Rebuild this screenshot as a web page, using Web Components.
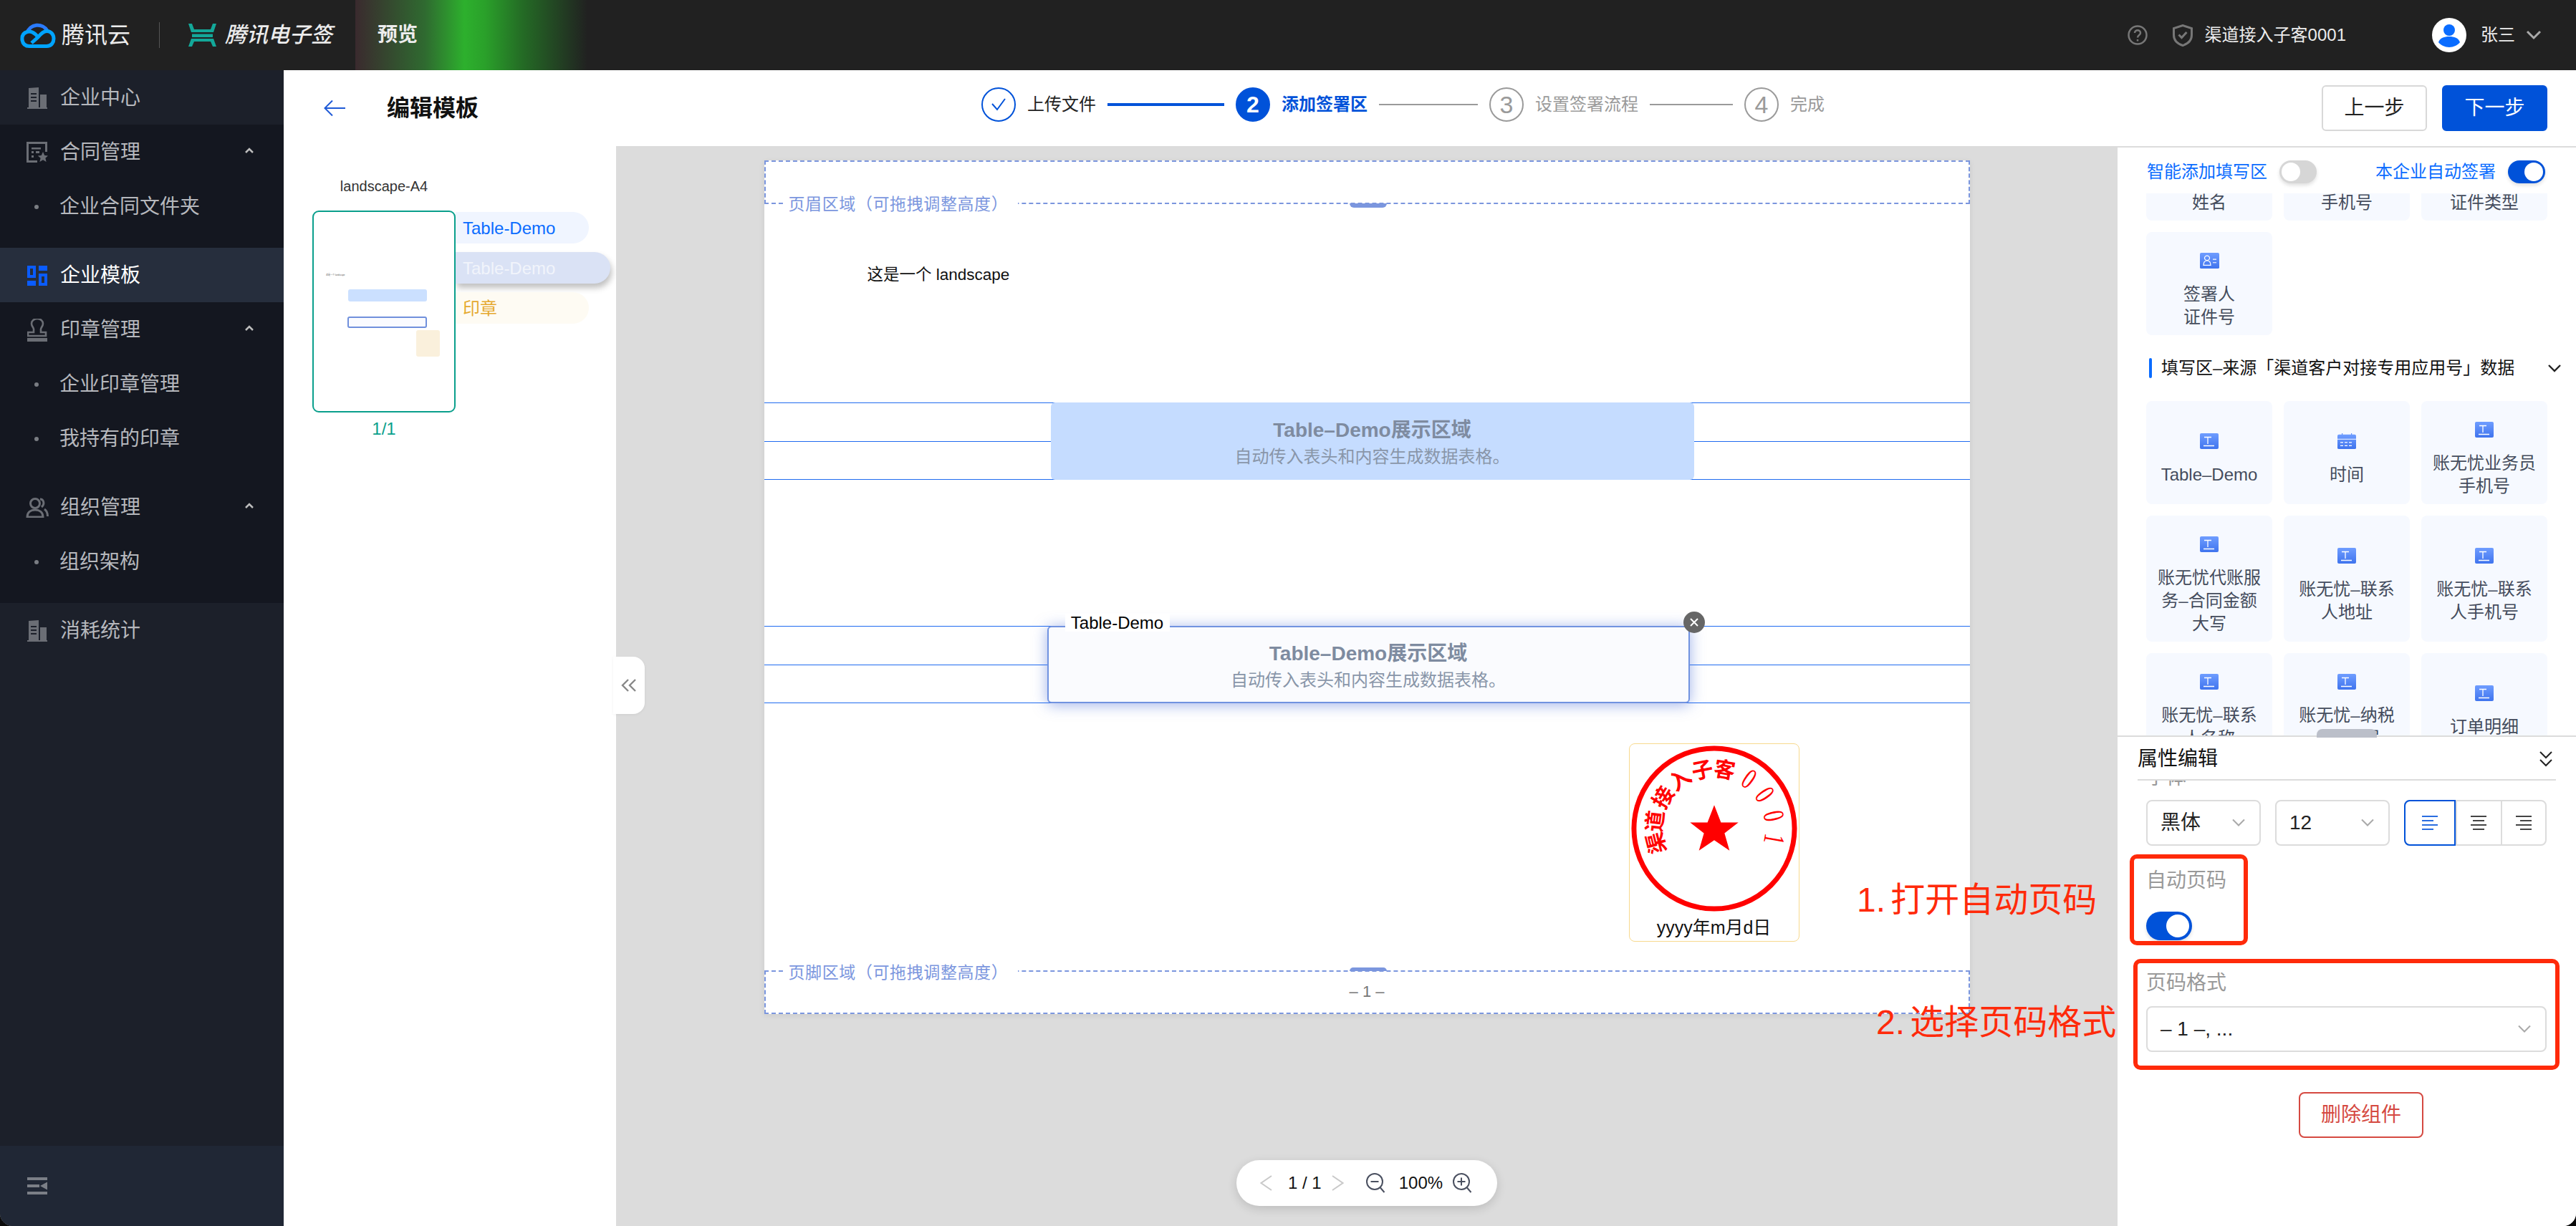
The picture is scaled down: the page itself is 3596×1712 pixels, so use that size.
<!DOCTYPE html>
<html lang="zh">
<head>
<meta charset="utf-8">
<title>编辑模板</title>
<style>
  html, body { margin: 0; background: #0b0b0b; }
  body { font-family: "Liberation Sans", "Noto Sans CJK SC", sans-serif; }
</style>
</head>
<body>
<tc-app>
  <tc-topbar slot="top"></tc-topbar>
  <tc-sidenav slot="nav">
    <tc-nav-item icon="building">企业中心</tc-nav-item>
    <tc-nav-group>
      <tc-nav-item icon="contract" caret>合同管理</tc-nav-item>
      <tc-nav-item sub>企业合同文件夹</tc-nav-item>
    </tc-nav-group>
    <tc-nav-item icon="template" active>企业模板</tc-nav-item>
    <tc-nav-group>
      <tc-nav-item icon="stamp" caret>印章管理</tc-nav-item>
      <tc-nav-item sub>企业印章管理</tc-nav-item>
      <tc-nav-item sub>我持有的印章</tc-nav-item>
    </tc-nav-group>
    <tc-nav-group>
      <tc-nav-item icon="users" caret>组织管理</tc-nav-item>
      <tc-nav-item sub>组织架构</tc-nav-item>
    </tc-nav-group>
    <tc-nav-item icon="building">消耗统计</tc-nav-item>
  </tc-sidenav>
  <tc-toolbar slot="toolbar"></tc-toolbar>
  <tc-rail slot="rail"></tc-rail>
  <tc-canvas slot="canvas"></tc-canvas>
  <tc-panel slot="panel"></tc-panel>
</tc-app>

<script>
// Petites icônes partagées
const ICONS = {
  building: `<svg width="28" height="30" viewBox="0 0 28 30" fill="#6b6e75"><path fill-rule="evenodd" d="M2 1 16 0v28H2zM5 8v2h8V8zm0 5v2h8v-2zm0 5v2h8v-2z"/><path d="M18 10h9v18h-9z"/><path d="M0 28h28v2H0z"/></svg>`,
  contract: `<svg width="30" height="30" viewBox="0 0 30 30" fill="none"><path d="M15 27.500H1.500V1.500h26V14" stroke="#6b6e75" stroke-width="3"/><path d="M7 8h13v2.500H7zM7 13h3v3H7zM13 13h5v3h-5zM7 19h3v3H7z" fill="#6b6e75"/><path d="m23 14 2.200 5 5 .4-3.800 3.400 1.200 5.200-4.600-2.800-4.600 2.800 1.200-5.200-3.800-3.400 5-.4z" fill="#6b6e75"/></svg>`,
  template: `<svg width="28" height="28" viewBox="0 0 28 28" fill="#0a5cff"><path fill-rule="evenodd" d="M0 0h12v17H0zm4 4v9h4V4zM16 11h12v17H16zm4 4v9h4v-9z"/><path d="M16 0h12v7H16zM0 21h12v7H0z"/></svg>`,
  stamp: `<svg width="28" height="32" viewBox="0 0 28 32" fill="none"><path d="M9 16c1-3-3-5-3-9a8 7 0 0 1 16 0c0 4-4 6-3 9v3h7v5H1v-5h8z" stroke="#6b6e75" stroke-width="2.600"/><path d="M0 27h28v5H0z" fill="#6b6e75"/></svg>`,
  users: `<svg width="32" height="28" viewBox="0 0 32 28" fill="none" stroke="#6b6e75" stroke-width="3"><circle cx="13" cy="8" r="6.500"/><path d="M2 27c0-7 5-10 11-10s11 3 11 10z"/><path d="M20 2c5 0 7 7 2 11M26 16c3 2 4.500 6 4.500 10"/></svg>`
};
const T_ICON = `<svg width="26" height="22" viewBox="0 0 26 22"><defs><linearGradient id="g" x1="0" y1="0" x2="0" y2="1"><stop offset="0" stop-color="#6f9dff"/><stop offset="1" stop-color="#3f74ee"/></linearGradient></defs><rect width="26" height="22" rx="2" fill="url(#g)"/><path d="M6 5.500h10M11 5.500V15M5 17.500h15" stroke="#fff" stroke-width="1.300" fill="none"/></svg>`;
const CAL_ICON = `<svg width="26" height="22" viewBox="0 0 26 24" preserveAspectRatio="none"><defs><linearGradient id="g" x1="0" y1="0" x2="0" y2="1"><stop offset="0" stop-color="#6f9dff"/><stop offset="1" stop-color="#3f74ee"/></linearGradient></defs><path d="M6 0h1.200v3H6zM19 0h1.200v3H19z" fill="#5f8ffa"/><rect y="2" width="26" height="22" rx="2" fill="url(#g)"/><path d="M0 9h26" stroke="#fff" stroke-width="1"/><path d="M4 14h18M4 19h18" stroke="#fff" stroke-width="1.300" stroke-dasharray="4 2"/></svg>`;
const ID_ICON = `<svg width="27" height="22" viewBox="0 0 27 24" preserveAspectRatio="none"><defs><linearGradient id="g" x1="0" y1="0" x2="0" y2="1"><stop offset="0" stop-color="#6f9dff"/><stop offset="1" stop-color="#3f74ee"/></linearGradient></defs><rect width="27" height="24" rx="2" fill="url(#g)"/><g fill="none" stroke="#fff" stroke-width="1.300"><circle cx="10" cy="8" r="3.500"/><path d="M5 19c0-5 2-7 5-7s5 2 5 7z"/><path d="M18 10h5M18 15h5"/></g></svg>`;
const CHEVRON = `<svg width="18" height="12" viewBox="0 0 18 12" fill="none"><path d="m1 1.500 8 8 8-8" stroke="#a9a9a9" stroke-width="2"/></svg>`;

class TcApp extends HTMLElement {
  constructor() {
    super();
    this.attachShadow({ mode: 'open' }).innerHTML = `
      <style>
        :host { display: block; position: relative; width: 3596px; height: 1712px; overflow: hidden; border-radius: 0 0 18px 18px; background: #fff; }
        .frame { display: flex; flex-direction: column; height: 100%; }
        .below { flex: 1; display: flex; min-height: 0; }
        .main { flex: 1; display: flex; flex-direction: column; min-width: 0; }
        .work { flex: 1; display: flex; min-height: 0; }
        .box { position: absolute; border: 6px solid #ff2a0a; border-radius: 10px; box-sizing: border-box; }
        .note { position: absolute; color: #ff2a0a; font-size: 48px; line-height: 60px; word-spacing: -6px; white-space: nowrap; }
      </style>
      <div class="frame">
        <slot name="top"></slot>
        <div class="below">
          <slot name="nav"></slot>
          <div class="main">
            <slot name="toolbar"></slot>
            <div class="work"><slot name="rail"></slot><slot name="canvas"></slot><slot name="panel"></slot></div>
          </div>
        </div>
      </div>
      <div class="box" style="left:2973px;top:1193px;width:165px;height:127px"></div>
      <div class="box" style="left:2978px;top:1339px;width:595px;height:155px"></div>
      <div class="note" style="left:2592px;top:1227px">1. 打开自动页码</div>
      <div class="note" style="left:2619px;top:1398px">2. 选择页码格式</div>`;
  }
}

class TcTopbar extends HTMLElement {
  constructor() {
    super();
    this.attachShadow({ mode: 'open' }).innerHTML = `
      <style>
        :host { display: flex; align-items: center; height: 98px; flex: none; background: #212121; color: #ececec; position: relative; }
        .glow { position: absolute; left: 496px; top: 0; width: 324px; height: 100%; background: linear-gradient(90deg, #3a2a2e 0%, #2f6a30 30%, #2db02d 47%, #2aa02a 56%, #246b25 72%, #212121 100%); }
        .left, .right { position: relative; display: flex; align-items: center; }
        .left { padding-left: 28px; }
        .cloud-name { font-size: 32px; line-height: 40px; margin-left: 8px; }
        .sep { width: 1px; height: 36px; background: #555; margin: 0 40px; }
        .sign-name { font-size: 30px; line-height: 40px; font-style: italic; font-weight: 500; margin-left: 12px; }
        .mode { font-size: 28px; line-height: 40px; font-weight: 700; margin-left: 63px; }
        .right { margin-left: auto; font-size: 24px; line-height: 32px; }
      </style>
      <div class="glow"></div>
      <div class="left">
        <svg width="50" height="36" viewBox="0 0 50 36" fill="none"><path d="M10 15A15 14 0 0 1 38 12" stroke="#2a7bff" stroke-width="5"/><path d="M25 21C20 14 14 12 10 13.500 4 15 2.500 20 3 25 4 31 8 33.500 13 33.500L37 33.500C44 33.500 47 28 47 23 47 17 43 12.500 37.500 12.500 32.500 12.500 29 16 25 21L16 29" stroke="#00a4ff" stroke-width="5"/></svg>
        <span class="cloud-name">腾讯云</span>
        <span class="sep"></span>
        <svg width="39" height="32" viewBox="0 0 39 32" fill="#13a899"><path d="M0 0h5l3 8h23l3-8h5l-4 12H4zM5 14.500h29V19H5zM4 21h31l4 11h-5l-3-7H8l-3 7H0z"/></svg>
        <span class="sign-name">腾讯电子签</span>
        <span class="mode">预览</span>
      </div>
      <div class="right">
        <svg width="28" height="28" viewBox="0 0 28 28" fill="none" stroke="#777" stroke-width="2.500"><circle cx="14" cy="14" r="12.500"/><path d="M10 11c0-5 8-5 8 0 0 3-4 3-4 6.500"/><path d="M14 20v2.500"/></svg>
        <svg style="margin-left:35px" width="28" height="31" viewBox="0 0 28 31" fill="none" stroke="#777" stroke-width="3"><path d="M14 1.500 26.500 5.500V15C26.500 23 20 27.500 14 29.500 8 27.500 1.500 23 1.500 15V5.500Z"/><path d="m8.500 14.500 4 4 7-7.500"/></svg>
        <span style="margin-left:17px">渠道接入子客0001</span>
        <svg style="margin-left:120px" width="48" height="48" viewBox="0 0 48 48"><circle cx="24" cy="24" r="24" fill="#fff"/><circle cx="24" cy="17" r="8" fill="#0a6cff"/><path d="M9 34c2-6 8-8 15-8s13 2 15 8c-3 4-9 7-15 7S12 38 9 34z" fill="#0a6cff"/></svg>
        <span style="margin-left:20px">张三</span>
        <svg style="margin:0 48px 0 15px" width="22" height="14" viewBox="0 0 22 14" fill="none"><path d="m2 2 9 9 9-9" stroke="#a9a9a9" stroke-width="3"/></svg>
      </div>`;
  }
}

class TcSidenav extends HTMLElement {
  constructor() {
    super();
    this.attachShadow({ mode: 'open' }).innerHTML = `
      <style>
        :host { display: flex; flex-direction: column; width: 396px; flex: none; background: #1c202a; }
        .foot { margin-top: auto; height: 112px; background: #202735; display: flex; align-items: center; padding-left: 38px; }
      </style>
      <slot></slot>
      <div class="foot"><svg width="28" height="24" viewBox="0 0 28 24" fill="#7b7f87"><path d="M0 0h28v4H0zM0 10h17v4H0zM0 20h28v4H0zM28 6.500v11L18 12z"/></svg></div>`;
  }
}

class TcNavGroup extends HTMLElement {
  constructor() {
    super();
    this.attachShadow({ mode: 'open' }).innerHTML = `
      <style>:host { display: block; background: #141720; padding-bottom: 20px; }</style>
      <slot></slot>`;
  }
}

class TcNavItem extends HTMLElement {
  connectedCallback() {
    if (this.shadowRoot) return;
    const isSub = this.hasAttribute('sub');
    const lead = isSub ? '<i class="dot"></i>' : `<span class="ico">${ICONS[this.getAttribute('icon')] || ''}</span>`;
    const caret = this.hasAttribute('caret')
      ? '<svg class="caret" width="14" height="9" viewBox="0 0 14 9" fill="none"><path d="m2 7 5-5 5 5" stroke="#bdbdbd" stroke-width="2.500"/></svg>' : '';
    this.attachShadow({ mode: 'open' }).innerHTML = `
      <style>
        :host { display: flex; align-items: center; box-sizing: border-box; height: 76px; padding: 2px 0 0 36px; color: #b6b8bd; font-size: 28px; line-height: 40px; }
        :host([active]) { background: #262e3d; color: #fff; }
        .ico { width: 32px; display: flex; justify-content: center; margin-right: 16px; }
        .dot { width: 6px; height: 6px; border-radius: 50%; background: #7a7d83; margin: 0 29px 0 12px; }
        .caret { margin-left: auto; margin-right: 41px; margin-top: -6px; }
      </style>
      ${lead}<slot></slot>${caret}`;
  }
}

class TcStep extends HTMLElement {
  connectedCallback() {
    if (this.shadowRoot) return;
    const state = this.getAttribute('state');
    const mark = state === 'done'
      ? '<svg width="24" height="20" viewBox="0 0 24 20" fill="none"><path d="m3 9 7 8L21 2" stroke="#0052d9" stroke-width="2"/></svg>'
      : this.getAttribute('num');
    this.attachShadow({ mode: 'open' }).innerHTML = `
      <style>
        :host { display: flex; align-items: center; gap: 16px; font-size: 24px; line-height: 32px; color: #9a9a9a; white-space: nowrap; }
        :host([state=done]) { color: #222; }
        :host([state=active]) { color: #0052d9; font-weight: 700; }
        .c { width: 48px; height: 48px; box-sizing: border-box; border-radius: 50%; border: 2px solid #9a9a9a; display: flex; align-items: center; justify-content: center; font-size: 34px; font-weight: 400; }
        :host([state=done]) .c { border-color: #0052d9; }
        :host([state=active]) .c { background: #0052d9; border-color: #0052d9; color: #fff; font-weight: 700; font-size: 32px; }
      </style>
      <span class="c">${mark}</span><slot></slot>`;
  }
}

class TcToolbar extends HTMLElement {
  constructor() {
    super();
    this.attachShadow({ mode: 'open' }).innerHTML = `
      <style>
        :host { display: flex; align-items: center; height: 106px; flex: none; background: #fff; }
        .head { width: 974px; flex: none; display: flex; align-items: center; padding-left: 56px; box-sizing: border-box; }
        h1 { margin: 0 0 0 58px; font-size: 32px; line-height: 44px; font-weight: 700; color: #111; }
        .steps { display: flex; align-items: center; gap: 16px; margin-bottom: 10px; }
        .ln { height: 2px; background: #9a9a9a; }
        .ln.on { height: 4px; background: #0052d9; }
        .acts { margin-left: auto; display: flex; gap: 21px; padding-right: 40px; }
        .btn { width: 147px; height: 64px; box-sizing: border-box; border-radius: 6px; border: 2px solid #d8d8d8; font-size: 28px; line-height: 60px; text-align: center; color: #222; }
        .btn.pri { background: #0052d9; border-color: #0052d9; color: #fff; }
      </style>
      <div class="head">
        <svg width="30" height="24" viewBox="0 0 30 24" fill="none"><path d="M30 12H2M12 1.500 1.500 12 12 22.500" stroke="#1f5ad6" stroke-width="2"/></svg>
        <h1>编辑模板</h1>
      </div>
      <div class="steps">
        <tc-step state="done">上传文件</tc-step><i class="ln on" style="width:163px"></i>
        <tc-step state="active" num="2">添加签署区</tc-step><i class="ln" style="width:138px"></i>
        <tc-step state="todo" num="3">设置签署流程</tc-step><i class="ln" style="width:116px"></i>
        <tc-step state="todo" num="4">完成</tc-step>
      </div>
      <div class="acts"><div class="btn">上一步</div><div class="btn pri">下一步</div></div>`;
  }
}

class TcRail extends HTMLElement {
  constructor() {
    super();
    this.attachShadow({ mode: 'open' }).innerHTML = `
      <style>
        :host { display: block; width: 464px; flex: none; background: #fff; padding: 41px 0 0 40px; box-sizing: border-box; }
        .name { width: 200px; text-align: center; font-size: 20px; line-height: 30px; color: #333; }
        .row { display: flex; margin-top: 19px; }
        .thumb { position: relative; width: 200px; height: 282px; box-sizing: border-box; border: 2px solid #0a9f8c; border-radius: 9px; background: #fff; flex: none; }
        .thumb span { position: absolute; border-radius: 3px; }
        .thumb em { position: absolute; left: 17px; top: 86px; font-style: normal; font-size: 3px; line-height: 4px; color: #555; white-space: nowrap; }
        .tags { display: flex; flex-direction: column; gap: 12px; padding-top: 2px; align-items: flex-start; }
        .tag { width: 176px; height: 44px; padding-left: 10px; font-size: 24px; line-height: 46px; border-radius: 0 22px 22px 0; }
        .a { background: #f0f5ff; color: #0a6cff; }
        .b { width: 206px; background: #dae2f5; color: #f1f4fb; box-shadow: 2px 6px 8px rgba(0,0,0,.25); }
        .c { background: #fefbf3; color: #e5a92f; }
        .page { width: 200px; text-align: center; margin-top: 8px; font-size: 24px; line-height: 30px; color: #0a9f8c; }
      </style>
      <div class="name">landscape-A4</div>
      <div class="row">
        <div class="thumb">
          <em>这是一个 landscape</em>
          <span style="left:48px;top:108px;width:110px;height:17px;background:#cbe0ff"></span>
          <span style="left:47px;top:146px;width:111px;height:16px;box-sizing:border-box;background:#fafbff;border:2px solid #7090dc"></span>
          <span style="left:143px;top:165px;width:33px;height:37px;background:#faf0dc"></span>
        </div>
        <div class="tags">
          <div class="tag a">Table-Demo</div>
          <div class="tag b">Table-Demo</div>
          <div class="tag c">印章</div>
        </div>
      </div>
      <div class="page">1/1</div>`;
  }
}

class TcTableZone extends HTMLElement {
  connectedCallback() {
    if (this.shadowRoot) return;
    const picked = this.hasAttribute('picked');
    this.attachShadow({ mode: 'open' }).innerHTML = `
      <style>
        :host { position: absolute; left: 0; right: 0; display: flex; flex-direction: column; justify-content: space-between; box-sizing: border-box; border-top: 1px solid #1f6bf0; border-bottom: 1px solid #1f6bf0; }
        .mid { height: 1px; background: #1f6bf0; }
        .card { position: absolute; top: -1px; bottom: -1px; box-sizing: border-box; padding-top: 4px; border-radius: 6px; background: #c5dcff; display: flex; flex-direction: column; align-items: center; justify-content: center; text-align: center; color: #7e8ba0; }
        :host([picked]) .card { background: #fafbfe; border: 2px solid #7193e0; box-shadow: 0 2px 20px rgba(80,115,215,.55); }
        b { font-size: 28px; line-height: 40px; }
        small { font-size: 24px; line-height: 34px; color: #8996a9; }
        .tag { position: absolute; left: 23px; top: -19px; width: 146px; height: 25px; background: #fff; color: #000; font-size: 24px; line-height: 25px; text-align: center; }
        .x { position: absolute; right: -23px; top: -22px; width: 30px; height: 30px; }
      </style>
      <div></div><div class="mid"></div><div></div>
      <div class="card" style="left:${this.getAttribute('x')}px;width:${this.getAttribute('w')}px">
        <b>Table–Demo展示区域</b><small>自动传入表头和内容生成数据表格。</small>
        ${picked ? `<div class="tag">Table-Demo</div><svg class="x" viewBox="0 0 30 30"><circle cx="15" cy="15" r="15" fill="#666"/><path d="m10 10 10 10m0-10L10 20" stroke="#fff" stroke-width="2"/></svg>` : ''}
      </div>`;
  }
}

class TcSeal extends HTMLElement {
  constructor() {
    super();
    const glyphs = [['渠',-104],['道',-83],['接',-58.6],['入',-35],['子',-11.5],['客',10],['0',35],['0',56],['0',78],['1',100]];
    const text = glyphs.map(([ch, a]) => {
      const rad = a * Math.PI / 180, x = 119 + 86 * Math.sin(rad), y = 118 - 86 * Math.cos(rad);
      const digit = /\d/.test(ch);
      const font = digit ? 'font-family="Liberation Serif" font-size="38"' : 'font-family="Noto Sans CJK SC" font-size="30" font-weight="700"';
      const squeeze = digit ? ' scale(.75 1.1)' : '';
      return `<text ${font} text-anchor="middle" dominant-baseline="central" fill="#f00" transform="translate(${x.toFixed(1)} ${y.toFixed(1)}) rotate(${a})${squeeze}">${ch}</text>`;
    }).join('');
    this.attachShadow({ mode: 'open' }).innerHTML = `
      <style>
        :host { position: absolute; left: 1207px; top: 814px; width: 238px; height: 277px; box-sizing: border-box; border: 1px solid #f8d98d; border-radius: 8px; display: flex; flex-direction: column; align-items: center; background: #fff; }
        svg { display: block; }
        div { font-size: 25px; line-height: 32px; color: #111; margin-top: 2px; white-space: nowrap; }
      </style>
      <svg width="236" height="238" viewBox="0 0 238 238"><circle cx="119" cy="118" r="113" fill="none" stroke="#f00" stroke-width="7"/>${text}<path d="m119 85 9.500 24.500h24.500l-19.500 15 7 24.500-21.500-14.500-21.500 14.500 7-24.500-19.500-15h24.500z" fill="#f00"/></svg>
      <div>yyyy年m月d日</div>`;
  }
}

class TcPager extends HTMLElement {
  constructor() {
    super();
    const lens = (inner) => `<svg width="27" height="28" viewBox="0 0 27 28" fill="none" stroke="#4a5060" stroke-width="2"><circle cx="12" cy="12" r="11"/><path d="m19.500 20 6 7"/>${inner}</svg>`;
    this.attachShadow({ mode: 'open' }).innerHTML = `
      <style>
        :host { display: flex; align-items: center; width: 364px; height: 64px; box-sizing: border-box; margin: 204px auto 0; padding-left: 33px; border-radius: 32px; background: #fff; box-shadow: 0 4px 14px rgba(0,0,0,.14); font-size: 24px; line-height: 32px; color: #111; white-space: nowrap; }
      </style>
      <svg width="17" height="22" viewBox="0 0 17 22" fill="none"><path d="M16 1 1.500 11 16 21" stroke="#c9c9c9" stroke-width="2"/></svg>
      <span style="margin-left:22px">1 / 1</span>
      <svg style="margin-left:14px" width="17" height="22" viewBox="0 0 17 22" fill="none"><path d="m1 1 14.500 10L1 21" stroke="#c9c9c9" stroke-width="2"/></svg>
      <span style="margin-left:31px;display:flex">${lens('<path d="M6.500 12h11"/>')}</span>
      <span style="margin-left:19px">100%</span>
      <span style="margin-left:14px;display:flex">${lens('<path d="M6.500 12h11M12 6.500v11"/>')}</span>`;
  }
}

class TcCanvas extends HTMLElement {
  constructor() {
    super();
    this.attachShadow({ mode: 'open' }).innerHTML = `
      <style>
        :host { display: block; position: relative; flex: 1; min-width: 0; background: #dcdcdc; padding-top: 20px; box-sizing: border-box; }
        .page { position: relative; width: 1683px; height: 1192px; margin: 0 auto; background: #fff; box-shadow: 0 2px 8px rgba(0,0,0,.08); }
        .zone { position: absolute; left: 0; right: 0; height: 61px; box-sizing: border-box; border: 2px dashed #7b96de; }
        .zone span { position: absolute; left: 27px; background: #fff; padding: 0 14px 0 5px; font-size: 23px; letter-spacing: .6px; line-height: 30px; color: #7b96de; white-space: nowrap; text-spacing-trim: space-all; }
        .grip { position: absolute; left: 817px; width: 52px; background: #7b96de; }
        .para { position: absolute; left: 144px; top: 146px; font-size: 22.5px; line-height: 28px; color: #111; white-space: nowrap; }
        .num { position: absolute; left: 0; right: 0; top: 1147px; text-align: center; font-size: 22px; line-height: 28px; color: #777; }
        .fold { position: absolute; left: -4px; top: 713px; width: 44px; height: 80px; background: #fff; border-radius: 0 16px 16px 0; display: flex; align-items: center; justify-content: center; box-shadow: 0 1px 4px rgba(0,0,0,.06); }
      </style>
      <div class="page">
        <div class="zone" style="top:0"><span style="top:44px">页眉区域（可拖拽调整高度）</span></div>
        <div class="grip" style="top:60px;height:6px;border-radius:0 0 8px 8px"></div>
        <div class="para">这是一个 landscape</div>
        <tc-table-zone style="top:338px;height:108px" x="400" w="898"></tc-table-zone>
        <tc-table-zone picked style="top:650px;height:108px" x="395" w="897"></tc-table-zone>
        <tc-seal></tc-seal>
        <div class="zone" style="top:1131px"><span style="top:-14px">页脚区域（可拖拽调整高度）</span></div>
        <div class="grip" style="top:1127px;height:5px;border-radius:8px 8px 0 0"></div>
        <div class="num">– 1 –</div>
      </div>
      <tc-pager></tc-pager>
      <div class="fold"><svg width="22" height="20" viewBox="0 0 22 20" fill="none"><path d="M10 2 2 10l8 8M20 2l-8 8 8 8" stroke="#888" stroke-width="2.400"/></svg></div>`;
  }
}

class TcToggle extends HTMLElement {
  connectedCallback() {
    if (this.shadowRoot) return;
    this.attachShadow({ mode: 'open' }).innerHTML = `
      <style>
        :host { display: flex; align-items: center; box-sizing: border-box; width: 52px; height: 32px; padding: 3px; border-radius: 16px; background: #d6d6d6; box-shadow: 0 3px 5px rgba(0,0,0,.12); flex: none; }
        :host([on]) { background: #0052d9; justify-content: flex-end; }
        :host([big]) { width: 64px; height: 40px; border-radius: 20px; padding: 4px; }
        i { display: block; height: 100%; aspect-ratio: 1; border-radius: 50%; background: #fff; }
      </style><i></i>`;
  }
}

class TcFieldCard extends HTMLElement {
  connectedCallback() {
    if (this.shadowRoot) return;
    const kind = this.getAttribute('kind');
    this.attachShadow({ mode: 'open' }).innerHTML = `
      <style>
        :host { display: flex; flex-direction: column; align-items: center; justify-content: center; box-sizing: border-box; padding: 29px 14px 9px; border-radius: 8px; background: #f6f9ff; color: #444c5c; font-size: 24px; line-height: 32px; text-align: center; }
        svg { display: block; flex: none; }
        div { margin-top: 20px; }
      </style>
      ${kind === 'cal' ? CAL_ICON : kind === 'id' ? ID_ICON : T_ICON}
      <div><slot></slot></div>`;
  }
}

class TcSelect extends HTMLElement {
  constructor() {
    super();
    this.attachShadow({ mode: 'open' }).innerHTML = `
      <style>
        :host { display: flex; align-items: center; justify-content: space-between; box-sizing: border-box; height: 64px; padding: 0 20px 0 18px; border: 2px solid #dcdcdc; border-radius: 8px; background: #fff; font-size: 28px; line-height: 40px; color: #222; }
      </style>
      <span><slot></slot></span>${CHEVRON}`;
  }
}

class TcPanel extends HTMLElement {
  constructor() {
    super();
    // Quatre traits pour les boutons d'alignement : [départ, longueur]
    const lines = (color, rows) => `<svg width="22" height="20" viewBox="0 0 22 20" fill="none" stroke="${color}" stroke-width="2"><path d="${rows.map(([x, w], i) => `M${x} ${1 + i * 6}h${w}`).join('')}"/></svg>`;
    this.attachShadow({ mode: 'open' }).innerHTML = `
      <style>
        :host { display: flex; flex-direction: column; width: 640px; flex: none; background: #fff; border-top: 2px solid #dcdcdc; box-sizing: border-box; }
        .top { height: 821px; flex: none; display: flex; flex-direction: column; position: relative; }
        .switches { display: flex; align-items: center; padding: 18px 46px 14px 41px; color: #0a6cff; font-size: 24px; line-height: 32px; gap: 17px; white-space: nowrap; }
        .switches tc-toggle:first-of-type { margin-right: 65px; }
        .scroll { flex: 1; overflow: hidden; padding: 0 40px; min-height: 0; }
        .grid { display: grid; grid-template-columns: repeat(3, 176px); gap: 16px; }
        .grid.first { margin-top: -74px; }
        .sec { display: flex; align-items: center; height: 28px; margin: 32px -20px 32px 4px; font-size: 24px; line-height: 28px; color: #111; }
        .sec i { width: 4px; height: 28px; border-radius: 2px; background: #0a6cff; margin-right: 13px; }
        .sec svg { margin-left: auto; }
        .grab { position: absolute; left: 278px; bottom: -3px; width: 84px; height: 12px; background: #bbbfc9; border-radius: 8px 8px 0 0; }
        .low { flex: 1; min-height: 0; display: flex; flex-direction: column; border-top: 2px solid #dcdcdc; }
        .title { display: flex; align-items: center; justify-content: space-between; height: 61px; flex: none; box-sizing: border-box; margin: 0 28px; padding: 2px 4px 0 0; border-bottom: 2px solid #dcdcdc; font-size: 28px; line-height: 40px; color: #111; }
        .body { flex: 1; overflow: hidden; padding: 0 41px 0 40px; }
        .lab { font-size: 28px; line-height: 40px; color: #999; }
        .fonts { display: flex; gap: 20px; margin-top: 11px; }
        .fonts tc-select { width: 160px; }
        .aligns { display: flex; width: 199px; height: 64px; box-sizing: border-box; border: 2px solid #dcdcdc; border-radius: 8px; }
        .aligns span { flex: 1; display: flex; align-items: center; justify-content: center; border-left: 2px solid #dcdcdc; }
        .aligns span:first-child { border: 2px solid #0052d9; border-radius: 8px 0 0 8px; margin: -2px 0 -2px -2px; flex: 0 0 68px; }
        .del { width: 174px; height: 64px; box-sizing: border-box; margin: 56px 0 0 213px; border: 2px solid #d54941; border-radius: 8px; color: #d54941; font-size: 28px; line-height: 60px; text-align: center; }
      </style>
      <div class="top">
        <div class="switches">
          <span>智能添加填写区</span><tc-toggle></tc-toggle>
          <span>本企业自动签署</span><tc-toggle on></tc-toggle>
        </div>
        <div class="scroll">
          <div class="grid first">
            <tc-field-card kind="id">姓名</tc-field-card>
            <tc-field-card kind="id">手机号</tc-field-card>
            <tc-field-card kind="id">证件类型</tc-field-card>
            <tc-field-card kind="id">签署人<br>证件号</tc-field-card>
          </div>
          <div class="sec"><i></i>填写区–来源「渠道客户对接专用应用号」数据<svg width="20" height="12" viewBox="0 0 20 12" fill="none"><path d="m2 2 8 8 8-8" stroke="#222" stroke-width="2.400"/></svg></div>
          <div class="grid">
            <tc-field-card>Table–Demo</tc-field-card>
            <tc-field-card kind="cal">时间</tc-field-card>
            <tc-field-card>账无忧业务员手机号</tc-field-card>
            <tc-field-card>账无忧代账服务–合同金额大写</tc-field-card>
            <tc-field-card>账无忧–联系人地址</tc-field-card>
            <tc-field-card>账无忧–联系人手机号</tc-field-card>
            <tc-field-card>账无忧–联系人名称</tc-field-card>
            <tc-field-card>账无忧–纳税人识别号</tc-field-card>
            <tc-field-card>订单明细</tc-field-card>
          </div>
        </div>
        <div class="grab"></div>
      </div>
      <div class="low">
        <div class="title">属性编辑
          <svg width="20" height="24" viewBox="0 0 20 24" fill="none" stroke="#222" stroke-width="2"><path d="m2 2 8 8 8-8M2 13l8 8 8-8"/></svg>
        </div>
        <div class="body">
          <div class="lab" style="margin-top:-24px">字体</div>
          <div class="fonts">
            <tc-select>黑体</tc-select>
            <tc-select>12</tc-select>
            <div class="aligns">
              <span>${lines('#2a6de0', [[0, 22], [0, 16], [0, 22], [0, 16]])}</span>
              <span>${lines('#444', [[0, 22], [3, 16], [0, 22], [3, 16]])}</span>
              <span>${lines('#444', [[0, 22], [6, 16], [0, 22], [6, 16]])}</span>
            </div>
          </div>
          <div class="lab" style="margin-top:29px">自动页码</div>
          <tc-toggle on big style="margin-top:23px"></tc-toggle>
          <div class="lab" style="margin-top:40px">页码格式</div>
          <tc-select style="margin-top:12px">– 1 –, ...</tc-select>
          <div class="del">删除组件</div>
        </div>
      </div>`;
  }
}

customElements.define('tc-app', TcApp);
customElements.define('tc-topbar', TcTopbar);
customElements.define('tc-sidenav', TcSidenav);
customElements.define('tc-nav-group', TcNavGroup);
customElements.define('tc-nav-item', TcNavItem);
customElements.define('tc-step', TcStep);
customElements.define('tc-toolbar', TcToolbar);
customElements.define('tc-rail', TcRail);
customElements.define('tc-table-zone', TcTableZone);
customElements.define('tc-seal', TcSeal);
customElements.define('tc-pager', TcPager);
customElements.define('tc-canvas', TcCanvas);
customElements.define('tc-toggle', TcToggle);
customElements.define('tc-field-card', TcFieldCard);
customElements.define('tc-select', TcSelect);
customElements.define('tc-panel', TcPanel);
</script>
</body>
</html>
